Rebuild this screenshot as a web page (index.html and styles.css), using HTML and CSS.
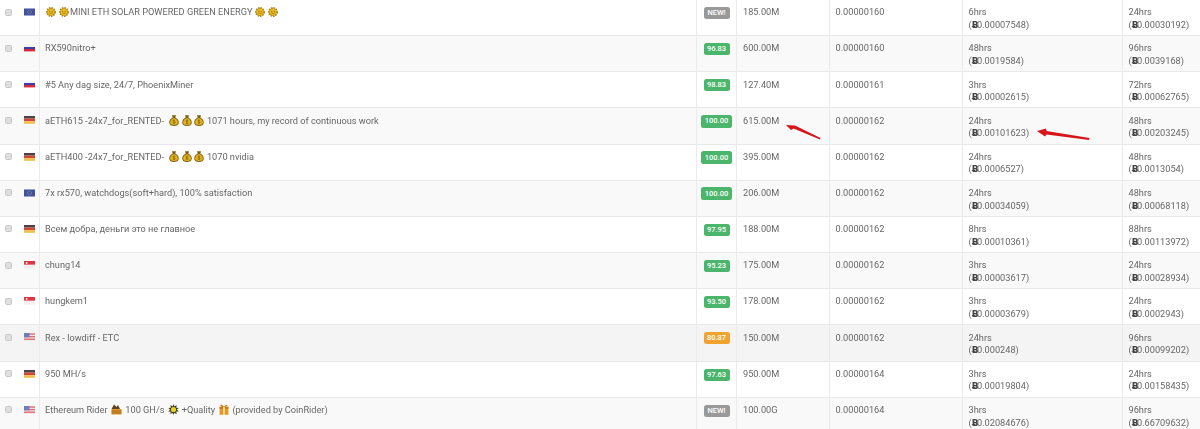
FILE: index.html
```html
<!DOCTYPE html>
<html lang="en">
<head>
<meta charset="utf-8">
<title>Orders</title>
<link rel="stylesheet" href="styles.css">
</head>
<body>
<svg class="defs" width="0" height="0" aria-hidden="true">
  <symbol id="eu" viewBox="0 0 11 8"><rect width="11" height="7" y=".5" fill="#3f51a3"/><circle cx="5.5" cy="4" r="1.9" fill="none" stroke="#a5a26a" stroke-width=".9" stroke-dasharray=".8 .6"/></symbol>
  <symbol id="ru" viewBox="0 0 11 8"><rect width="11" height="2" y="1" fill="#f1f1f6"/><rect width="11" height="2" y="3" fill="#3a3fa8"/><rect width="11" height="2.4" y="5" fill="#d8283a"/></symbol>
  <symbol id="de" viewBox="0 0 11 8"><rect width="11" height="2.6" fill="#4a4342"/><rect width="11" height="2.6" y="2.6" fill="#d0463a"/><rect width="11" height="2.6" y="5.2" fill="#efc04a"/></symbol>
  <symbol id="sg" viewBox="0 0 11 8"><rect width="11" height="3.800" fill="#e0343f"/><rect width="11" height="3.800" y="3.800" fill="#f4eeee"/><circle cx="2.600" cy="1.900" r="1" fill="#f4f0f0"/></symbol>
  <symbol id="us" viewBox="0 0 11 8"><rect width="11" height="7.600" fill="#f2dfe0"/><rect width="11" height="1.300" y=".4" fill="#dc6a72"/><rect width="11" height="1.300" y="3" fill="#dc6a72"/><rect width="11" height="1.300" y="5.600" fill="#dc6a72"/><rect width="5.500" height="4.300" fill="#6f7dbd"/></symbol>
  <symbol id="sun" viewBox="0 0 10 10"><circle cx="5" cy="5" r="4.100" fill="none" stroke="#a9820f" stroke-width="1.700" stroke-dasharray="1.500 .9"/><circle cx="5" cy="5" r="3.600" fill="#f0bd1c" stroke="#a9820f" stroke-width=".6"/><circle cx="3.800" cy="4.300" r=".55" fill="#6b5208"/><circle cx="6.200" cy="4.300" r=".55" fill="#6b5208"/><path d="M3.400 5.900q1.600 1.400 3.200 0" fill="none" stroke="#6b5208" stroke-width=".55"/></symbol>
  <symbol id="bag" viewBox="0 0 10 11"><path d="M3 .2h4L6.300 2.600c2.100 1 3.500 3 3.500 4.900 0 2.500-2.200 3.400-4.800 3.400S.2 10 .2 7.500c0-1.900 1.400-3.900 3.500-4.900z" fill="#7d600e"/><path d="M4.200 3.300h1.600C7.500 4.200 8.900 5.900 8.900 7.500 8.900 9.200 7.300 10 5 10S1.100 9.200 1.100 7.500C1.100 5.900 2.500 4.200 4.200 3.300z" fill="#e3b31e"/><path d="M5 4.700v4.200" stroke="#7a5c0c" stroke-width=".7"/><path d="M6.200 5.500c-1-.6-2.400-.4-2.400.5s2.400.7 2.400 1.600-1.400 1.100-2.400.5" fill="none" stroke="#7a5c0c" stroke-width=".6"/></symbol>
  <symbol id="sled" viewBox="0 0 11 11"><path d="M.5 5 3 .5 5.500 3 7 1 9 5z" fill="#5f4320"/><rect x=".5" y="5" width="10" height="5.500" fill="#e39a2a"/><path d="M.5 7h10M.5 9h10" stroke="#7a4d14" stroke-width=".7"/></symbol>
  <symbol id="burst" viewBox="0 0 11 11"><path d="M5.500 0l1 2.400 2.100-1.400-.3 2.700 2.500.2-1.900 1.700 1.900 1.800-2.500.1.300 2.700-2.100-1.500-1 2.300-1-2.300-2.100 1.500.3-2.700-2.500-.1 1.900-1.800L.3 3.900l2.500-.2L2.500 1l2.100 1.400z" fill="#3f3d1a"/><circle cx="5.500" cy="5.500" r="2.600" fill="#e9cf2e"/></symbol>
  <symbol id="gift" viewBox="0 0 10 11"><rect x=".6" y="2.800" width="8.800" height="8" fill="#e7972a"/><rect x=".6" y="2.800" width="8.800" height="2" fill="#c9761a"/><rect x="4" y="2.800" width="2" height="8" fill="#f6d98a"/><path d="M5 2.800C3.400.2 1 .2 1.500 1.700S4.400 2.800 5 2.800c.6 0 3-.3 3.500-1.100S6.600.2 5 2.800z" fill="#c9761a"/></symbol>
</svg>
<table class="orders">
  <colgroup>
    <col class="c-check"><col class="c-flag"><col class="c-name"><col class="c-score"><col class="c-hash"><col class="c-price"><col class="c-a"><col class="c-b">
  </colgroup>
  <tbody>
    <tr>
      <td class="check"><span class="box"></span></td><td class="flag"><svg class="fl"><use href="#eu"/></svg></td>
      <td class="name"><svg class="em sun1"><use href="#sun"/></svg><svg class="em sun2"><use href="#sun"/></svg>MINI ETH SOLAR POWERED GREEN ENERGY <svg class="em sun3"><use href="#sun"/></svg><svg class="em sun2"><use href="#sun"/></svg></td>
      <td class="score"><span class="badge grey">NEW!</span></td><td class="hash">185.00M</td><td>0.00000160</td>
      <td>6hrs<br>(<b class="btc">Ƀ</b>0.00007548)</td><td>24hrs<br>(<b class="btc">Ƀ</b>0.00030192)</td>
    </tr>
    <tr>
      <td class="check"><span class="box"></span></td><td class="flag"><svg class="fl"><use href="#ru"/></svg></td>
      <td class="name">RX590nitro+</td>
      <td class="score"><span class="badge green">96.83</span></td><td class="hash">600.00M</td><td>0.00000160</td>
      <td>48hrs<br>(<b class="btc">Ƀ</b>0.0019584)</td><td>96hrs<br>(<b class="btc">Ƀ</b>0.0039168)</td>
    </tr>
    <tr>
      <td class="check"><span class="box"></span></td><td class="flag"><svg class="fl"><use href="#ru"/></svg></td>
      <td class="name">#5 Any dag size, 24/7, PhoenixMiner</td>
      <td class="score"><span class="badge green">98.83</span></td><td class="hash">127.40M</td><td>0.00000161</td>
      <td>3hrs<br>(<b class="btc">Ƀ</b>0.00002615)</td><td>72hrs<br>(<b class="btc">Ƀ</b>0.00062765)</td>
    </tr>
    <tr>
      <td class="check"><span class="box"></span></td><td class="flag"><svg class="fl"><use href="#de"/></svg></td>
      <td class="name">aETH615 -24x7_for_RENTED- <svg class="em bag"><use href="#bag"/></svg><svg class="em bag"><use href="#bag"/></svg><svg class="em bag"><use href="#bag"/></svg>1071 hours, my record of continuous work</td>
      <td class="score"><span class="badge green wide">100.00</span></td><td class="hash">615.00M</td><td>0.00000162</td>
      <td>24hrs<br>(<b class="btc">Ƀ</b>0.00101623)</td><td>48hrs<br>(<b class="btc">Ƀ</b>0.00203245)</td>
    </tr>
    <tr>
      <td class="check"><span class="box"></span></td><td class="flag"><svg class="fl"><use href="#de"/></svg></td>
      <td class="name">aETH400 -24x7_for_RENTED- <svg class="em bag"><use href="#bag"/></svg><svg class="em bag"><use href="#bag"/></svg><svg class="em bag"><use href="#bag"/></svg>1070 nvidia</td>
      <td class="score"><span class="badge green wide">100.00</span></td><td class="hash">395.00M</td><td>0.00000162</td>
      <td>24hrs<br>(<b class="btc">Ƀ</b>0.0006527)</td><td>48hrs<br>(<b class="btc">Ƀ</b>0.0013054)</td>
    </tr>
    <tr>
      <td class="check"><span class="box"></span></td><td class="flag"><svg class="fl"><use href="#eu"/></svg></td>
      <td class="name">7x rx570, watchdogs(soft+hard), 100% satisfaction</td>
      <td class="score"><span class="badge green wide">100.00</span></td><td class="hash">206.00M</td><td>0.00000162</td>
      <td>24hrs<br>(<b class="btc">Ƀ</b>0.00034059)</td><td>48hrs<br>(<b class="btc">Ƀ</b>0.00068118)</td>
    </tr>
    <tr>
      <td class="check"><span class="box"></span></td><td class="flag"><svg class="fl"><use href="#de"/></svg></td>
      <td class="name">Всем добра, деньги это не главное</td>
      <td class="score"><span class="badge green">97.95</span></td><td class="hash">188.00M</td><td>0.00000162</td>
      <td>8hrs<br>(<b class="btc">Ƀ</b>0.00010361)</td><td>88hrs<br>(<b class="btc">Ƀ</b>0.00113972)</td>
    </tr>
    <tr>
      <td class="check"><span class="box"></span></td><td class="flag"><svg class="fl"><use href="#sg"/></svg></td>
      <td class="name">chung14</td>
      <td class="score"><span class="badge green">95.23</span></td><td class="hash">175.00M</td><td>0.00000162</td>
      <td>3hrs<br>(<b class="btc">Ƀ</b>0.00003617)</td><td>24hrs<br>(<b class="btc">Ƀ</b>0.00028934)</td>
    </tr>
    <tr>
      <td class="check"><span class="box"></span></td><td class="flag"><svg class="fl"><use href="#sg"/></svg></td>
      <td class="name">hungkem1</td>
      <td class="score"><span class="badge green">93.50</span></td><td class="hash">178.00M</td><td>0.00000162</td>
      <td>3hrs<br>(<b class="btc">Ƀ</b>0.00003679)</td><td>24hrs<br>(<b class="btc">Ƀ</b>0.0002943)</td>
    </tr>
    <tr class="hover">
      <td class="check"><span class="box"></span></td><td class="flag"><svg class="fl"><use href="#us"/></svg></td>
      <td class="name">Rex - lowdiff - ETC</td>
      <td class="score"><span class="badge orange">80.87</span></td><td class="hash">150.00M</td><td>0.00000162</td>
      <td>24hrs<br>(<b class="btc">Ƀ</b>0.000248)</td><td>96hrs<br>(<b class="btc">Ƀ</b>0.00099202)</td>
    </tr>
    <tr>
      <td class="check"><span class="box"></span></td><td class="flag"><svg class="fl"><use href="#de"/></svg></td>
      <td class="name">950 MH/s</td>
      <td class="score"><span class="badge green">97.63</span></td><td class="hash">950.00M</td><td>0.00000164</td>
      <td>3hrs<br>(<b class="btc">Ƀ</b>0.00019804)</td><td>24hrs<br>(<b class="btc">Ƀ</b>0.00158435)</td>
    </tr>
    <tr>
      <td class="check"><span class="box"></span></td><td class="flag"><svg class="fl"><use href="#us"/></svg></td>
      <td class="name">Ethereum Rider <svg class="em inl"><use href="#sled"/></svg>100 GH/s <svg class="em inl burst"><use href="#burst"/></svg>+Quality <svg class="em inl giftbox"><use href="#gift"/></svg>(provided by CoinRider)</td>
      <td class="score"><span class="badge grey">NEW!</span></td><td class="hash">100.00G</td><td>0.00000164</td>
      <td>3hrs<br>(<b class="btc">Ƀ</b>0.02084676)</td><td>96hrs<br>(<b class="btc">Ƀ</b>0.66709632)</td>
    </tr>
  </tbody>
</table>
<svg class="arrows" viewBox="0 0 1200 429" aria-hidden="true">
  <path d="M786 125 795 125.500 820.500 138 820 139.500 793.500 128.500 791 130z" fill="#d7151a"/>
  <path d="M1037 131 1046 128.500 1046.500 131 1089.500 138 1089 140 1046.500 134.500 1045 136.500z" fill="#d7151a"/>
</svg>
</body>
</html>
```

FILE: styles.css
```css
html, body {
  margin: 0;
  padding: 0;
  background: #fff;
  height: 429px;
  overflow: hidden;
}

.defs {
  position: absolute;
}

.orders {
  width: 1200px;
  margin-top: -1px;
  table-layout: fixed;
  border-collapse: collapse;
  font-family: Roboto, "Noto Sans", sans-serif;
  font-size: 9.2px;
  line-height: 12.6px;
  color: #676767;
  filter: blur(0.4px);
}

.c-check { width: 17px; }
.c-flag { width: 22px; }
.c-name { width: 657px; }
.c-score { width: 40px; }
.c-hash { width: 93px; }
.c-price { width: 133px; }
.c-a { width: 160px; }
.c-b { width: 78px; }

.orders tr {
  height: 36.17px;
}

.orders tbody tr:nth-child(even) {
  background: #f9f9f9;
}

.orders tbody tr.hover {
  background: #f4f4f4;
}

.orders td {
  padding: 6.2px 6px 0;
  vertical-align: top;
  border-top: 1px solid #e9e9e9;
  border-left: 1px solid #ecebeb;
  white-space: nowrap;
  overflow: hidden;
}

.orders td:first-child {
  border-left: 0;
}

.orders td.name {
  padding-left: 5.5px;
}

.orders td.hash {
  padding-left: 6.5px;
}

.orders td.flag {
  border-left: 0;
  padding: 8px 0 0 7px;
}

.orders td.check {
  padding: 8.5px 0 0 5px;
}

.box {
  display: block;
  width: 5px;
  height: 5px;
  background: #dedede;
  border: 1px solid #c8c8c8;
  border-radius: 1.5px;
}

.fl {
  display: block;
  width: 11px;
  height: 8px;
}

.em {
  display: inline-block;
  width: 10px;
  height: 10px;
  vertical-align: -2px;
  margin-right: 3px;
}

.sun1 {
  margin-left: 1px;
}

.sun2 {
  margin-right: 1px;
}

.sun3 {
  margin-left: 0;
  margin-right: 3px;
}

.bag {
  width: 10px;
  height: 11px;
  vertical-align: -2.5px;
  margin-left: 3px;
  margin-right: 2.5px;
}

.inl {
  width: 11px;
  height: 11px;
  vertical-align: -2.5px;
  margin-left: 1.5px;
}

.burst {
  margin-left: 1px;
}

.giftbox {
  width: 10px;
  margin-right: 3.5px;
}

.bag + .bag {
  margin-left: 0;
}

.score {
  text-align: center;
}

.orders td.score {
  padding: 6px 0 0 1px;
}

.badge {
  display: inline-block;
  min-width: 20px;
  padding: 1px 3px;
  border-radius: 2.5px;
  font-size: 7.5px;
  line-height: 10px;
  font-weight: 500;
  color: #fff;
}

.wide {
  padding: 1.5px 3.5px;
}

.green { background: #4cb56c; }
.orange { background: #f0a42f; }
.grey { background: #999; }

.btc {
  font-family: "DejaVu Sans", sans-serif;
  font-size: 9px;
  color: #444;
  margin-right: -1.5px;
}

.arrows {
  position: absolute;
  left: 0;
  top: 0;
  width: 1200px;
  height: 429px;
  pointer-events: none;
}
```
